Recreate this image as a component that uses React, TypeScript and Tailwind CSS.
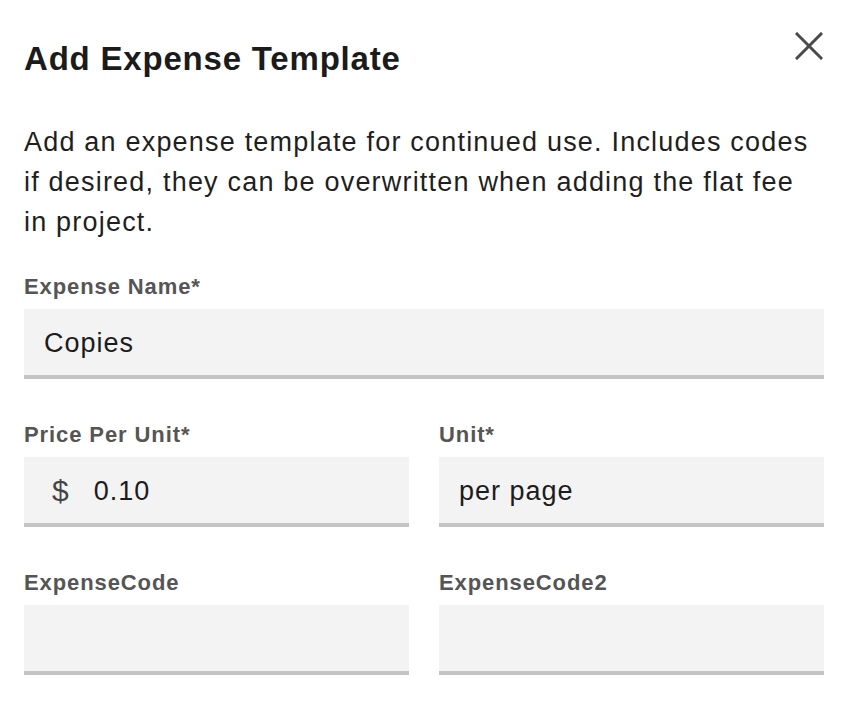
import React from "react";

type FieldProps = {
  label: string;
  value?: string;
  prefix?: string;
};

function Field({ label, value = "", prefix }: FieldProps) {
  return (
    <label className="flex flex-col">
      <span className="mb-[10px] text-[22px] font-bold leading-[24px] tracking-[0.9px] text-[#555555]">
        {label}
      </span>
      <div className="flex h-[70px] items-center border-b-4 border-[#c4c4c4] bg-[#f3f3f3] pt-[2px]">
        {prefix ? (
          <span className="pl-[28px] pr-[25px] text-[30px] leading-none text-[#444444]">{prefix}</span>
        ) : null}
        <input
          readOnly
          defaultValue={value}
          className={
            prefix
              ? "min-w-0 flex-1 bg-transparent pr-5 text-[27px] tracking-[1px] text-[#1c1c1c] outline-none"
              : "min-w-0 flex-1 bg-transparent px-5 text-[27px] tracking-[1px] text-[#1c1c1c] outline-none"
          }
        />
      </div>
    </label>
  );
}

function CloseIcon() {
  return (
    <svg width="28" height="28" viewBox="0 0 28 28" fill="none" aria-label="Close">
      <path d="M2 2 L26 26 M26 2 L2 26" stroke="#4a4a4a" strokeWidth="3" strokeLinecap="square" />
    </svg>
  );
}

export default function App() {
  return (
    <div className="min-h-screen bg-white font-['Liberation_Sans',Arial,Helvetica,sans-serif]">
      <div className="pl-6 pr-[26px] pt-8">
        <div className="flex items-start justify-between">
          <h2 className="mt-[7px] text-[33px] font-bold leading-[40px] tracking-[0.8px] text-[#1b1b1b]">
            Add Expense Template
          </h2>
          <button className="mr-[1px] h-[28px] w-[28px]">
            <CloseIcon />
          </button>
        </div>

        <p className="mt-[43px] text-[27px] leading-[40px] tracking-[1.2px] text-[#1f1f1f]">
          Add an expense template for continued use. Includes codes if desired, they can be overwritten when adding
          the flat fee in project.
        </p>

        <div className="mt-[33px] flex flex-col gap-[44px]">
          <Field label="Expense Name*" value="Copies" />
          <div className="grid grid-cols-2 gap-x-[30px] gap-y-[44px]">
            <Field label="Price Per Unit*" value="0.10" prefix="$" />
            <Field label="Unit*" value="per page" />
            <Field label="ExpenseCode" />
            <Field label="ExpenseCode2" />
          </div>
        </div>
      </div>
    </div>
  );
}
